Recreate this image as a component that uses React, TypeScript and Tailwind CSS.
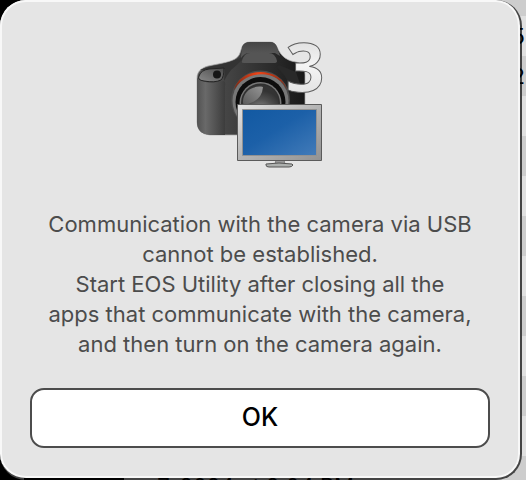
type Props = {
  lines: string[];
};

function CameraIcon() {
  return (
    <svg
      viewBox="0 0 160 150"
      className="h-[150px] w-40 overflow-visible"
      role="img"
      aria-label="EOS Utility 3"
    >
      <defs>
        <linearGradient id="body" x1="0" x2="1" y1="0" y2="0">
          <stop offset="0" stopColor="#555" />
          <stop offset=".22" stopColor="#484848" />
          <stop offset=".5" stopColor="#363636" />
          <stop offset="1" stopColor="#181818" />
        </linearGradient>
        <linearGradient id="grip" x1="0" x2="1" y1="0" y2="0">
          <stop offset="0" stopColor="#525252" />
          <stop offset=".3" stopColor="#696969" />
          <stop offset="1" stopColor="#3c3c3c" />
        </linearGradient>
        <linearGradient id="prism" x1="0" x2="0" y1="0" y2="1">
          <stop offset="0" stopColor="#454545" />
          <stop offset="1" stopColor="#5c5c5c" />
        </linearGradient>
        <linearGradient id="plate" x1="0" x2="1" y1="1" y2="0">
          <stop offset="0" stopColor="#8a8a8a" />
          <stop offset="1" stopColor="#4a4a4a" />
        </linearGradient>
        <radialGradient id="glass" cx=".5" cy=".75" r=".6">
          <stop offset="0" stopColor="#929292" />
          <stop offset=".6" stopColor="#505050" />
          <stop offset="1" stopColor="#333" />
        </radialGradient>
        <linearGradient id="glare" x1="0" x2="1" y1="1" y2="0">
          <stop offset="0" stopColor="#5a5a5a" />
          <stop offset="1" stopColor="#959595" />
        </linearGradient>
        <linearGradient id="red" x1="0" x2="1" y1="0" y2="0">
          <stop offset="0" stopColor="#7c2a16" />
          <stop offset=".45" stopColor="#f04417" />
          <stop offset="1" stopColor="#842812" />
        </linearGradient>
        <linearGradient id="frame" x1="0" x2="1" y1="0" y2="1">
          <stop offset="0" stopColor="#e4e4e4" />
          <stop offset=".5" stopColor="#b4b4b4" />
          <stop offset="1" stopColor="#929292" />
        </linearGradient>
        <linearGradient id="screen" x1="0" x2="1" y1="0" y2="1">
          <stop offset="0" stopColor="#1259a2" />
          <stop offset=".45" stopColor="#1c60a8" />
          <stop offset="1" stopColor="#427bb9" />
        </linearGradient>
        <linearGradient id="three" x1="0" x2="0" y1="0" y2="1">
          <stop offset="0" stopColor="#cfcfcf" />
          <stop offset=".5" stopColor="#f4f4f4" />
          <stop offset="1" stopColor="#d8d8d8" />
        </linearGradient>
      </defs>

      {/* camera body */}
      <path
        d="M17 48C17 42 21 38 28 36L43 33C52 31 58 29 60 23L62 17Q64 12 70 12H90Q95 12 97 17C101 27 108 31 116 32C122 33 125 38 125 45V96Q125 105 116 105H30Q17 104 17 92Z"
        fill="url(#body)"
        stroke="#aaa"
        strokeWidth=".7"
      />
      <path
        d="M17 48C22 53 34 54 43 51Q46 50 45 57L45 105H30Q17 104 17 92Z"
        fill="url(#grip)"
      />
      <path
        d="M20 40C29 35 43 36 60 28L68 23Q62 31 51 40Q47 45 44 51L45 39Z"
        fill="#333"
      />
      <path
        d="M62 17Q64 12 70 12H90Q95 12 97 17L100 26L95 23H69Q64 23 61 28Z"
        fill="url(#prism)"
      />
      <path
        d="M62 31Q64 23 70 23H89Q95 23 97 31Q97 33 94 33H64Q61 33 62 31Z"
        fill="#555"
      />
      <path
        d="M19 46Q21 40 29 39L44 38Q44 47 41 50Q35 53 24 51Q17 50 19 46Z"
        fill="url(#plate)"
        stroke="#242424"
        strokeWidth="1"
      />
      <circle cx="37" cy="44.500" r="4" fill="#151515" />
      <path d="M99 35L116 42L120 54L111 59Q106 44 96 37Z" fill="#292929" />

      {/* lens */}
      <circle cx="80.500" cy="70" r="29.500" fill="#4c4c4c" />
      <circle cx="80.500" cy="71" r="28" fill="#777" />
      <path
        d="M54 60C60 36 101 36 107 60C98 39 66 39 54 60Z"
        fill="url(#red)"
      />
      <circle cx="80.500" cy="72" r="25" fill="#0d0d0d" />
      <circle cx="80.500" cy="73" r="21" fill="#777" />
      <circle cx="80.500" cy="73" r="19.500" fill="#303030" />
      <circle cx="80.500" cy="73" r="18" fill="url(#glass)" />
      <path d="M63 72C63 61 73 55 83 57Q82 70 68 74Q63 76 63 72Z" fill="url(#glare)" />

      {/* version numeral */}
      <text
        x="125"
        y="62"
        textAnchor="middle"
        fill="url(#three)"
        stroke="#5e5e5e"
        strokeWidth="1"
        className="font-['Open_Sans',sans-serif] text-[68px] font-bold"
      >
        3
      </text>

      {/* monitor */}
      <path d="M96 130H104L105 134H95Z" fill="#999" stroke="#666" strokeWidth=".7" />
      <path
        d="M86 134Q99 132 112 134L113 135Q112 137 109 137H89Q86 137 86 135Z"
        fill="#adb0ae"
        stroke="#555"
        strokeWidth="1"
      />
      <path d="M57.500 74.500H141.500V130.500H57.500Z" fill="url(#frame)" stroke="#5b5b5b" strokeWidth="1" />
      <path d="M62.500 79.500H136.500V125.500H62.500Z" fill="url(#screen)" stroke="#929292" strokeWidth="1" />
    </svg>
  );
}

function AlertDialog({ lines }: Props) {
  return (
    <section
      role="alertdialog"
      aria-labelledby="message"
      className="mr-1 flex min-h-screen flex-col rounded-[26px] border-r-2 border-b-2 border-[#444] bg-[#e5e5e5] p-[30px] shadow-[inset_0_0_0_2px_#f8f8f8]"
    >
      <div className="flex justify-center">
        <CameraIcon />
      </div>
      <p
        id="message"
        className="mt-[29px] text-center text-[22px] leading-[30px] whitespace-nowrap text-[#4c4c4c]"
      >
        {lines.map((line) => (
          <span key={line} className="block">
            {line}
          </span>
        ))}
      </p>
      <button
        type="button"
        className="mt-[29px] h-[60px] w-full rounded-[14px] border-2 border-[#4c4c4c] bg-white text-[25px] font-medium text-black"
      >
        OK
      </button>
    </section>
  );
}

// Slivers of the file list that show past the edges of the dialog
function FileListBehind() {
  return (
    <div aria-hidden="true" className="text-[22px] leading-10 text-black">
      <div className="absolute top-4 right-0 h-20 w-[6px] overflow-hidden">
        <div className="absolute right-px">
          <p>5</p>
          <p>2</p>
        </div>
      </div>
      <div className="absolute bottom-0 left-6 h-0.5 w-[330px] overflow-hidden bg-[linear-gradient(to_right,#000_100px,transparent_100px)]">
        <p className="text-right leading-4 whitespace-nowrap">7, 2024 at 2:04 PM</p>
      </div>
    </div>
  );
}

export default function App() {
  return (
    <main className="relative min-h-screen overflow-hidden bg-[linear-gradient(to_right,#000_50%,transparent_50%),repeating-linear-gradient(to_bottom,#cdcdcd_0px,#cdcdcd_16px,#e0e0e0_16px,#e0e0e0_56px,#cdcdcd_56px,#cdcdcd_80px)] font-['Inter',sans-serif]">
      <AlertDialog
        lines={[
          "Communication with the camera via USB",
          "cannot be established.",
          "Start EOS Utility after closing all the",
          "apps that communicate with the camera,",
          "and then turn on the camera again.",
        ]}
      />
      <FileListBehind />
    </main>
  );
}
